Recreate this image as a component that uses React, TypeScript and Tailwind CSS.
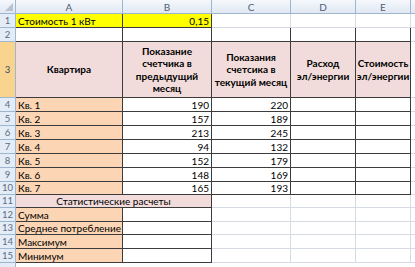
import React from "react";

type Cell = {
  text?: string;
  lines?: string[];
  align?: "left" | "right" | "center";
  bg?: string;
  dark?: boolean;
  span?: number;
};

const GRID = "border-[#d6dbe3]";
const DARK = "border-[#3c3c3c]";
const PINK = "bg-[#f2dcdb]";
const PEACH = "bg-[#fcd5b4]";

const alignClass = {
  left: "justify-start pl-[2px]",
  right: "justify-end pr-[2px]",
  center: "justify-center text-center",
};

const rows: { n: string; h: string; sel?: boolean; cells: Cell[] }[] = [
  {
    n: "1",
    h: "h-[14px]",
    cells: [
      { text: "Стоимость 1 кВт", bg: "bg-[#ffff00]", dark: true },
      { text: "0,15", align: "right", bg: "bg-[#ffff00]", dark: true },
      {},
      {},
      {},
    ],
  },
  { n: "2", h: "h-[14px]", cells: [{ dark: true }, { dark: true }, { dark: true }, { dark: true }, { dark: true }] },
  {
    n: "3",
    h: "h-[56px]",
    sel: true,
    cells: [
      { lines: ["Квартира"], align: "center", bg: PINK, dark: true },
      { lines: ["Показание", "счетчика в", "предыдущий", "месяц"], align: "center", bg: PINK, dark: true },
      { lines: ["Показания", "счетсика в", "текущий месяц"], align: "center", bg: PINK, dark: true },
      { lines: ["Расход", "эл/энергии"], align: "center", bg: PINK, dark: true },
      { lines: ["Стоимость", "эл/энергии"], align: "center", bg: PINK, dark: true },
    ],
  },
];

const flats: [string, string, string, string][] = [
  ["4", "Кв. 1", "190", "220"],
  ["5", "Кв. 2", "157", "189"],
  ["6", "Кв. 3", "213", "245"],
  ["7", "Кв. 4", "94", "132"],
  ["8", "Кв. 5", "152", "179"],
  ["9", "Кв. 6", "148", "169"],
  ["10", "Кв. 7", "165", "193"],
];
const flatHeights = ["h-[14px]", "h-[14px]", "h-[14px]", "h-[14px]", "h-[14px]", "h-[14px]", "h-[13px]"];

flats.forEach(([n, name, prev, cur], i) => {
  rows.push({
    n,
    h: flatHeights[i],
    cells: [
      { text: name, bg: PEACH, dark: true },
      { text: prev, align: "right", dark: true },
      { text: cur, align: "right", dark: true },
      { dark: true },
      { dark: true },
    ],
  });
});

rows.push({
  n: "11",
  h: "h-[13px]",
  cells: [{ text: "Статистические расчеты", align: "center", bg: PINK, dark: true, span: 2 }, {}, {}, {}],
});

const stats: [string, string, string][] = [
  ["12", "Сумма", "h-[14px]"],
  ["13", "Среднее потребление", "h-[13px]"],
  ["14", "Максимум", "h-[14px]"],
  ["15", "Минимум", "h-[14px]"],
];
stats.forEach(([n, label, h]) => {
  rows.push({
    n,
    h,
    cells: [{ text: label, bg: PEACH, dark: true }, { dark: true }, {}, {}, {}],
  });
});

const widths = ["w-[107px]", "w-[89px]", "w-[79px]", "w-[65px]", "w-[55px]"];
const spanWidths: Record<number, string> = { 2: "w-[196px]" };

function Row({ row }: { row: (typeof rows)[number] }) {
  let col = 0;
  return (
    <div className={`flex ${row.h}`}>
      <div
        className={`w-[16px] shrink-0 flex items-center justify-center border-r border-b border-[#9eb6ce] text-[9.5px] ${
          row.sel ? "bg-[#f8d48f] text-[#3b4a5c]" : "bg-[#e4ecf7] text-[#5b6b80]"
        }`}
      >
        {row.n}
      </div>
      {row.cells.map((c, i) => {
        const w = c.span ? spanWidths[c.span] : widths[col];
        col += c.span ?? 1;
        const al = alignClass[c.align ?? "left"];
        return (
          <div
            key={i}
            className={`${w} shrink-0 flex items-center border-r border-b ${c.dark ? DARK : GRID} ${
              c.bg ?? "bg-white"
            } ${al}`}
          >
            {c.lines ? (
              <div className="flex flex-col items-center font-bold leading-[12.5px] whitespace-nowrap">
                {c.lines.map((l) => (
                  <span key={l}>{l}</span>
                ))}
              </div>
            ) : (
              <span className="whitespace-nowrap">{c.text}</span>
            )}
          </div>
        );
      })}
      <div className={`flex-1 border-b ${GRID} bg-white`} />
    </div>
  );
}

export default function App() {
  const letters = ["A", "B", "C", "D", "E"];
  return (
    <div
      className="w-[415px] h-[267px] overflow-hidden bg-white text-black text-[10px] leading-none"
      style={{ fontFamily: "Lato, 'Liberation Sans', sans-serif" }}
    >
      <div className="flex h-[14px] bg-gradient-to-b from-[#f5f8fc] to-[#dfe7f2] text-[#4f5f73] text-[10px]">
        <div className="w-[16px] shrink-0 relative border-r border-b border-[#9eb6ce]">
          <svg className="absolute right-[2px] bottom-[2px]" width="8" height="8" viewBox="0 0 8 8">
            <polygon points="8,0 8,8 0,8" fill="#b7c3d1" />
          </svg>
        </div>
        {letters.map((l, i) => (
          <div
            key={l}
            className={`${widths[i]} shrink-0 flex items-center justify-center border-r border-b border-[#9eb6ce]`}
          >
            {l}
          </div>
        ))}
        <div className="flex-1 border-b border-[#9eb6ce]" />
      </div>
      {rows.map((r) => (
        <Row key={r.n} row={r} />
      ))}
      <div className="flex h-[6px]">
        <div className="w-[16px] shrink-0 border-r border-[#9eb6ce] bg-[#e4ecf7]" />
        <div className="flex-1 bg-white" />
      </div>
    </div>
  );
}
